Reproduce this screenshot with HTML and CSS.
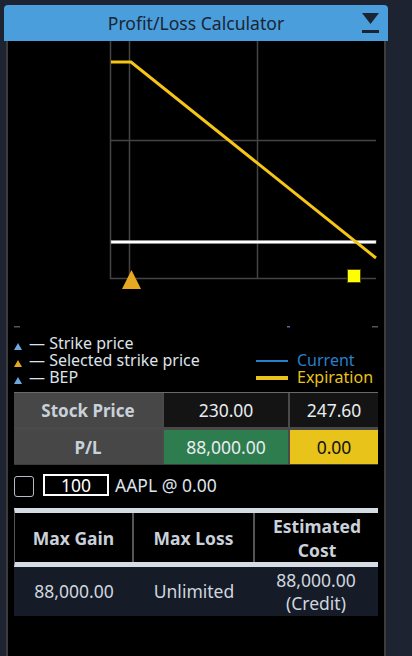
FILE: index.html
```html
<!DOCTYPE html>
<html>
<head>
<meta charset="utf-8">
<link rel="stylesheet" href="styles.css">
</head>
<body>
<div class="panel">
  <div class="header">
    <span class="title">Profit/Loss Calculator</span>
    <svg class="hicon" width="18" height="22" viewBox="0 0 18 22">
      <polygon points="0,0 17,0 8.5,11" fill="#1a2433"/>
      <rect x="0" y="17" width="17" height="3" fill="#1a2433"/>
    </svg>
  </div>
  <div class="body">
    <svg class="chart" width="376" height="294" viewBox="8 41 376 294">
      <g stroke="#444" stroke-width="1.5">
        <line x1="110.5" y1="41" x2="110.5" y2="279"/>
        <line x1="129.5" y1="41" x2="129.5" y2="279"/>
        <line x1="257.5" y1="41" x2="257.5" y2="279"/>
        <line x1="110" y1="140.5" x2="376" y2="140.5"/>
        <line x1="110" y1="278.5" x2="376" y2="278.5"/>
      </g>
      <rect x="111" y="240.5" width="265" height="3" fill="#fff" stroke="#999" stroke-width="0.5"/>
      <polyline points="111,62 131,62 376,258" fill="none" stroke="#f5c518" stroke-width="3"/>
      <polygon points="122,289 141,289 131.5,270" fill="#e6a820"/>
      <rect x="347.5" y="269.5" width="13" height="13" fill="#ffff00" stroke="#4a4a00" stroke-width="1"/>
      <rect x="14" y="326" width="6" height="1.5" fill="#555"/>
      <rect x="287" y="326" width="3" height="1.5" fill="#4a6fa5"/>
      <rect x="372" y="326" width="6" height="1.5" fill="#555"/>
    </svg>
    <div class="legend">
      <div class="lcol">
        <div class="litem"><span class="tri blue"></span><span class="lt">— Strike price</span></div>
        <div class="litem"><span class="tri orange"></span><span class="lt">— Selected strike price</span></div>
        <div class="litem"><span class="tri blue"></span><span class="lt">— BEP</span></div>
      </div>
      <div class="rcol">
        <div class="ritem"><span class="line cur"></span><span class="ltext cur-t">Current</span></div>
        <div class="ritem"><span class="line exp"></span><span class="ltext exp-t">Expiration</span></div>
      </div>
    </div>
    <div class="pltable">
      <div class="hcell">Stock Price</div>
      <div class="vcell">230.00</div>
      <div class="vcell">247.60</div>
      <div class="hcell">P/L</div>
      <div class="vcell green">88,000.00</div>
      <div class="vcell yellow">0.00</div>
    </div>
    <div class="stockrow">
      <span class="check"></span>
      <span class="qty">100</span>
      <span class="sym">AAPL @ 0.00</span>
    </div>
    <div class="summary">
      <div class="shead">
        <div class="sh">Max Gain</div>
        <div class="sh">Max Loss</div>
        <div class="sh">Estimated<br>Cost</div>
      </div>
      <div class="sdata">
        <div class="sd">88,000.00</div>
        <div class="sd">Unlimited</div>
        <div class="sd">88,000.00<br>(Credit)</div>
      </div>
    </div>
  </div>
</div>
</body>
</html>
```
FILE: styles.css
```css
html, body {
  margin: 0;
  padding: 0;
  background: #1d2331;
  font-family: "Noto Sans", "Open Sans", sans-serif;
  overflow: hidden;
}
.panel {
  margin: 5px 0 0 4px;
  width: 384px;
}
.header {
  height: 36px;
  background: #4a9edb;
  border-radius: 4px 4px 0 0;
  display: flex;
  align-items: center;
  justify-content: center;
  position: relative;
}
.title {
  font-size: 17.6px;
  color: #1b2535;
}
.hicon {
  position: absolute;
  right: 8px;
  top: 8px;
}
.body {
  margin: 0 2px;
  background: #000;
  border-left: 2px solid #3c3c3c;
  border-right: 2px solid #3c3c3c;
  height: 620px;
}
.chart {
  display: block;
}
.legend {
  display: flex;
  padding-left: 6px;
  height: 57px;
  color: #dde3ea;
  font-size: 16px;
}
.lcol {
  display: flex;
  flex-direction: column;
  width: 242px;
}
.litem {
  height: 17px;
  display: flex;
  align-items: center;
  white-space: nowrap;
}
.lt {
  margin-left: 7px;
  line-height: 17px;
  height: 17px;
}
.tri {
  width: 0;
  height: 0;
  border-left: 4px solid transparent;
  border-right: 4px solid transparent;
  border-bottom: 7px solid #6fa8dc;
  margin-top: 6px;
}
.tri.orange {
  border-bottom-color: #e6a820;
}
.rcol {
  display: flex;
  flex-direction: column;
  padding-top: 17px;
}
.ritem {
  height: 17px;
  display: flex;
  align-items: center;
  white-space: nowrap;
}
.ltext {
  line-height: 17px;
  height: 17px;
}
.line {
  width: 32px;
  margin-right: 9px;
}
.line.cur {
  height: 2px;
  background: #2a7fc9;
}
.line.exp {
  height: 4px;
  background: #e8c31a;
}
.cur-t {
  color: #2a7fc9;
}
.exp-t {
  color: #e8c31a;
}
.pltable {
  margin: 0 6px;
  display: grid;
  grid-template-columns: 148px 124px 88px;
  grid-template-rows: 34px 34px;
  gap: 3px 2px;
  background: #4a4a4a;
  border-top: 1px solid #6a6a6a;
  border-bottom: 1px solid #3a3a3a;
  font-size: 17px;
}
.hcell {
  background: #474747;
  color: #c9d1da;
  font-weight: bold;
  display: flex;
  align-items: center;
  justify-content: center;
}
.vcell {
  background: #141414;
  color: #e8ecf0;
  display: flex;
  align-items: center;
  justify-content: center;
  font-size: 17.5px;
}
.vcell.green {
  background: #2e7d4f;
}
.vcell.yellow {
  background: #e8c31a;
  color: #111;
}
.stockrow {
  display: flex;
  align-items: center;
  margin: 8px 0 0 6px;
  height: 24px;
  font-size: 17.5px;
  color: #dde3ea;
}
.check {
  width: 18px;
  height: 19px;
  border: 1.5px solid #b5bcc4;
  border-radius: 3px;
  margin-top: 3px;
}
.qty {
  width: 62px;
  height: 18px;
  border: 2px solid #fff;
  margin-left: 9px;
  display: flex;
  align-items: center;
  justify-content: center;
  color: #fff;
  line-height: 18px;
}
.sym {
  margin-left: 6px;
}
.summary {
  margin: 11px 6px 0 6px;
  font-size: 17.5px;
}
.shead {
  display: grid;
  grid-template-columns: 119px 121px 124px;
  background: #000;
  border-top: 5px solid #d6dce4;
  border-bottom: 5px solid #d6dce4;
  border-left: 1px solid #555;
  height: 49px;
}
.sh {
  color: #c9d1da;
  font-weight: bold;
  display: flex;
  align-items: center;
  justify-content: center;
  text-align: center;
  line-height: 24px;
  border-right: 2px solid #555;
}
.sh:last-child {
  border-right: none;
}
.sdata {
  display: grid;
  grid-template-columns: 120px 120px 124px;
  background: #151c28;
  height: 49px;
}
.sd {
  color: #d0d6de;
  display: flex;
  align-items: center;
  justify-content: center;
  text-align: center;
  line-height: 23px;
}
```
